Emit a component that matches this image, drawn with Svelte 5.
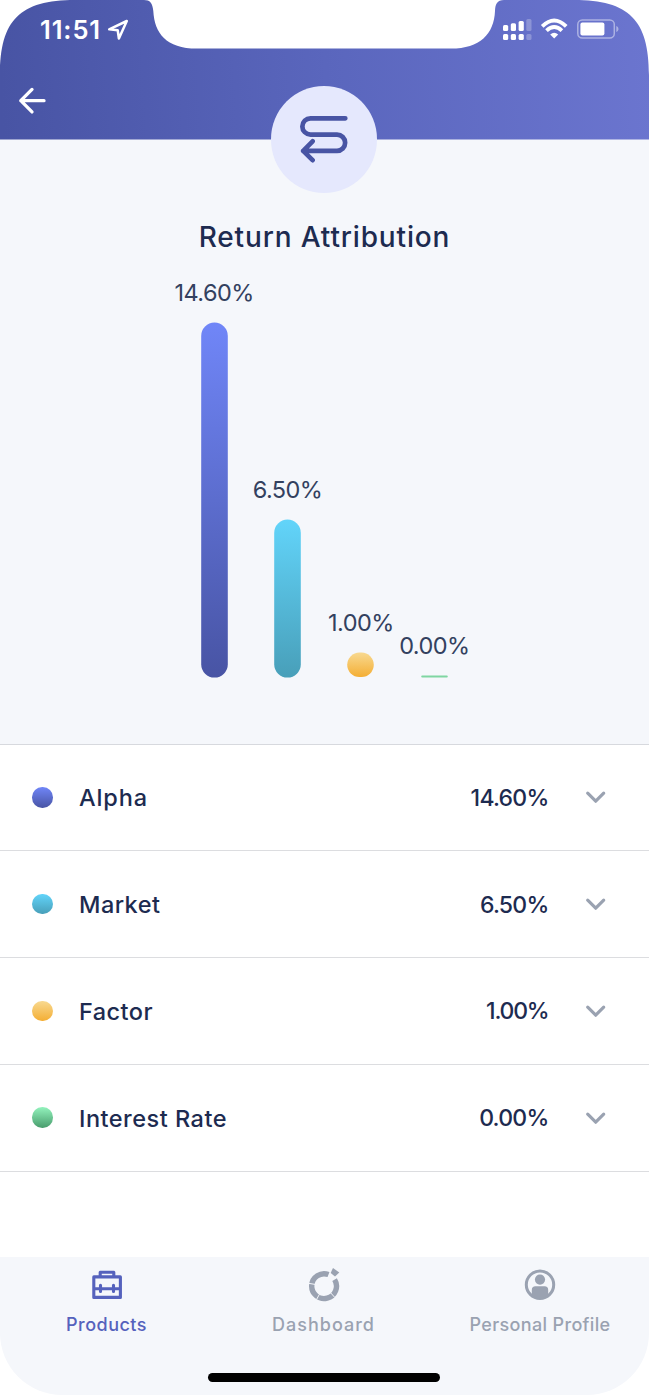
<script>
  const items = [
    { name: 'Alpha', value: '14.60%', height: 355, from: '#7086f8', to: '#4854a4', track: 0.85, vtrack: -0.75 },
    { name: 'Market', value: '6.50%', height: 158, from: '#62d4fa', to: '#489fb9', track: 0.45, vtrack: -0.75 },
    { name: 'Factor', value: '1.00%', height: 24.5, from: '#f8d990', to: '#f4ae34', track: 0.45, vtrack: -1.2 },
    { name: 'Interest Rate', value: '0.00%', height: 2, from: '#93f3bd', to: '#489c6c', bar: '#7fd6a2', track: 0.5, vtrack: -0.75 }
  ];
</script>

<div class="screen">
  <header>
    <svg class="backdrop" width="649" height="140" viewBox="0 0 649 140">
      <defs>
        <linearGradient id="head" gradientUnits="userSpaceOnUse" x1="0" y1="60" x2="649" y2="30">
          <stop offset="0" stop-color="#4854a4" />
          <stop offset="0.5" stop-color="#5a66bd" />
          <stop offset="1" stop-color="#6b75cf" />
        </linearGradient>
      </defs>
      <path fill="url(#head)" d="M0 139.5V75C0 20 20 0 75 0H144C150 0 152.6 3 153.3 11C154.5 33 166 48.6 197 48.6H451C480 48.6 494 34 495 11C495.300 4 497 0 504 0H574C629 0 649 20 649 75V139.500Z" />
    </svg>
    <div class="status">
      <span class="time">11:51</span>
      <svg class="loc" width="22" height="22" viewBox="0 0 22 22" fill="none" stroke="#fff" stroke-width="2.500" stroke-linejoin="round"><path d="M2.200 10.300L19.800 2L11.900 19.500L10.700 11.300Z" /></svg>
      <svg class="signal" width="116" height="24" viewBox="0 0 116 24">
        <g fill="#fff">
          <rect x="0" y="8" width="5.200" height="6" rx="1.500" />
          <rect x="7.800" y="6.200" width="5.200" height="7.800" rx="1.500" />
          <rect x="15.600" y="4" width="5.200" height="10" rx="1.500" />
          <rect x="0" y="17" width="5.200" height="6" rx="1.500" />
          <rect x="7.800" y="17" width="5.200" height="6" rx="1.500" />
          <rect x="15.600" y="17" width="5.200" height="6" rx="1.500" />
          <g opacity=".25">
            <rect x="23.300" y="2" width="5.200" height="12" rx="1.500" />
            <rect x="23.300" y="17" width="5.200" height="6" rx="1.500" />
          </g>
          <path d="M51.200 21.500L47.200 17.600Q51.200 14 55.200 17.600Z" />
          <rect x="77.400" y="5.500" width="24" height="13" rx="2" />
          <path opacity=".45" d="M113.300 9V15C116.200 13.800 116.200 10.200 113.300 9Z" />
        </g>
        <g fill="none" stroke="#fff" stroke-width="3.800">
          <path d="M39.200 9.300Q51.200 -2.500 63.200 9.300" />
          <path d="M43.500 13.700Q51.200 6.500 58.900 13.700" />
        </g>
        <rect x="74.800" y="3" width="36.500" height="18" rx="4.500" fill="none" stroke="#fff" stroke-opacity=".45" stroke-width="1.500" />
      </svg>
    </div>
    <svg class="back" width="28" height="28" viewBox="0 0 28 28" fill="none" stroke="#fff" stroke-width="3.300" stroke-linecap="round" stroke-linejoin="round"><path d="M26 13.700H2.800M14 2.400L2.800 13.700L14 24.900" /></svg>
    <div class="emblem">
      <svg width="48" height="48" viewBox="0 0 48 48" fill="none" stroke="#4854a4" stroke-width="4.700" stroke-linecap="round" stroke-linejoin="round">
        <path d="M45.300 3.300H10.500A8.150 8.150 0 0 0 10.500 19.600H37A8.150 8.150 0 0 1 37 35.900H3.200M12.600 26.300L3.200 35.900L12.600 45.200" />
      </svg>
    </div>
  </header>

  <section class="summary">
    <h1>Return Attribution</h1>
    <div class="chart">
      {#each items as item}
        <div class="column">
          <span class="label">{item.value}</span>
          <svg class="bar" width="27" height={item.height + 1} viewBox="0 0 27 {item.height + 1}">
            <defs>
              <linearGradient id="fill-{item.name.charAt(0)}" x1="0" y1="0" x2="0" y2="1">
                <stop offset="0" stop-color={item.bar ?? item.from} />
                <stop offset="1" stop-color={item.bar ?? item.to} />
              </linearGradient>
            </defs>
            <rect x="0.200" y="0.600" width="26.600" height={item.height} rx={Math.min(13.3, item.height / 2)} fill="url(#fill-{item.name.charAt(0)})" />
          </svg>
        </div>
      {/each}
    </div>
  </section>

  <ul>
    {#each items as item}
      <li>
        <i class="dot" style="background:linear-gradient({item.from}, {item.to})"></i>
        <span class="name" style="letter-spacing:{item.track}px">{item.name}</span>
        <span class="value" style="letter-spacing:{item.vtrack}px">{item.value}</span>
        <svg width="22" height="14" viewBox="0 0 22 14" fill="none" stroke="#9aa2b1" stroke-width="3.200" stroke-linecap="round" stroke-linejoin="round"><path d="M2.700 3.200L10.700 11.200L18.700 3.200" /></svg>
      </li>
    {/each}
  </ul>

  <nav>
    <div class="tab active">
      <svg width="36" height="36" viewBox="0 0 36 36" fill="none" stroke="#5562bd" stroke-width="3.100" stroke-linejoin="round">
        <path d="M4.800 8.900H31.400V29.400H4.800ZM11.200 8.400V4.300H24.800V8.400M4.800 20.700H31.400" />
        <path d="M11.500 17.300V23.500M24.500 17.300V23.500" stroke-linecap="round" />
      </svg>
      <span>Products</span>
    </div>
    <div class="tab dash">
      <svg width="36" height="36" viewBox="0 0 36 36" fill="none" stroke="#9aa2b1">
        <path d="M28.600 11.600A12.400 12.400 0 1 1 22.500 6.600" stroke-width="5.400" />
        <path d="M2.500 15.300L9 16.400M10.500 31.500L13.600 26M28.700 29.300L24.500 24.700" stroke="#f5f7fb" stroke-width="1" />
        <path d="M27 0L33.300 4.500L29 8.500L24.700 4.900Z" fill="#9aa2b1" stroke="none" />
      </svg>
      <span>Dashboard</span>
    </div>
    <div class="tab profile">
      <svg width="36" height="36" viewBox="0 0 36 36" fill="#9aa2b1">
        <circle cx="18" cy="16.700" r="13.700" fill="none" stroke="#9aa2b1" stroke-width="3" />
        <circle cx="18" cy="11.600" r="5.100" />
        <path d="M9.800 27V22Q9.800 18.300 13.500 18.300H22.500Q26.200 18.300 26.200 22V27Q18 34 9.800 27Z" />
      </svg>
      <span>Personal Profile</span>
    </div>
    <div class="home"></div>
  </nav>
</div>

<style>
  :global(body) { background: #fff; }
  .screen { width: 649px; height: 1395px; display: flex; flex-direction: column; font-family: Inter, sans-serif; color: #1d2b50; background: #fff; overflow: hidden; }
  header { position: relative; height: 139.5px; flex: none; background: linear-gradient(#fff 80px, #f5f7fb 80px); }
  .backdrop { position: absolute; left: 0; top: 0; }
  .status { position: relative; display: flex; height: 60px; padding: 0 30px 0 40px; align-items: center; color: #fff; }
  .time { font-size: 25.500px; font-weight: 600; width: 67px; letter-spacing: 0.9px; white-space: nowrap; margin-top: -2px; }
  .loc { margin-top: -1px; }
  .signal { margin-left: auto; margin-top: -2px; }
  .back { position: relative; display: block; margin: 27px 0 0 18px; }
  .emblem { position: absolute; left: 270.500px; top: 86px; width: 106.500px; height: 107px; border-radius: 50%; background: #e5e8fd; display: flex; align-items: center; justify-content: center; }
  .emblem svg { margin-top: -1px; }
  .summary { height: 605px; flex: none; background: #f5f7fb; border-bottom: 1px solid #d7d9de; display: flex; flex-direction: column; align-items: center; justify-content: space-between; padding: 80px 0 66px; box-sizing: border-box; }
  h1 { margin: 0; font-size: 28px; line-height: 34px; font-weight: 500; letter-spacing: 0.850px; white-space: nowrap; }
  .chart { display: flex; align-items: flex-end; margin-right: 0.5px; }
  .column { width: 73.400px; display: flex; flex-direction: column; align-items: center; gap: 15px; }
  .label { font-size: 23.500px; line-height: 28px; letter-spacing: -0.550px; color: #33415f; white-space: nowrap; }
  .bar { display: block; }
  ul { margin: 0; padding: 0; list-style: none; flex: none; }
  li { height: 106.750px; box-sizing: border-box; border-bottom: 1px solid #dcdde0; display: flex; align-items: center; padding: 0 42px 0 32px; }
  .dot { width: 20.500px; height: 20.500px; border-radius: 50%; margin-right: 26.500px; }
  .name { font-size: 23.500px; font-weight: 500; padding-top: 1px; }
  .value { margin-left: auto; margin-right: 36.500px; font-size: 23px; font-weight: 500; padding-top: 1px; }
  nav { position: relative; margin-top: auto; height: 138px; background: #f5f7fb; border-radius: 0 0 62px 62px; display: grid; grid-template-columns: 213px 221px 212px; padding: 11px 0 0; box-sizing: border-box; }
  .tab { display: flex; flex-direction: column; align-items: center; gap: 9px; color: #9aa2b1; font-size: 18px; line-height: 24px; font-weight: 500; white-space: nowrap; letter-spacing: 0.350px; }
  .active { color: #5562bd; letter-spacing: 0.500px; }
  .dash { letter-spacing: 1px; }
  .home { position: absolute; left: 208px; top: 116px; width: 232px; height: 8.500px; border-radius: 5px; background: #000; }
</style>
